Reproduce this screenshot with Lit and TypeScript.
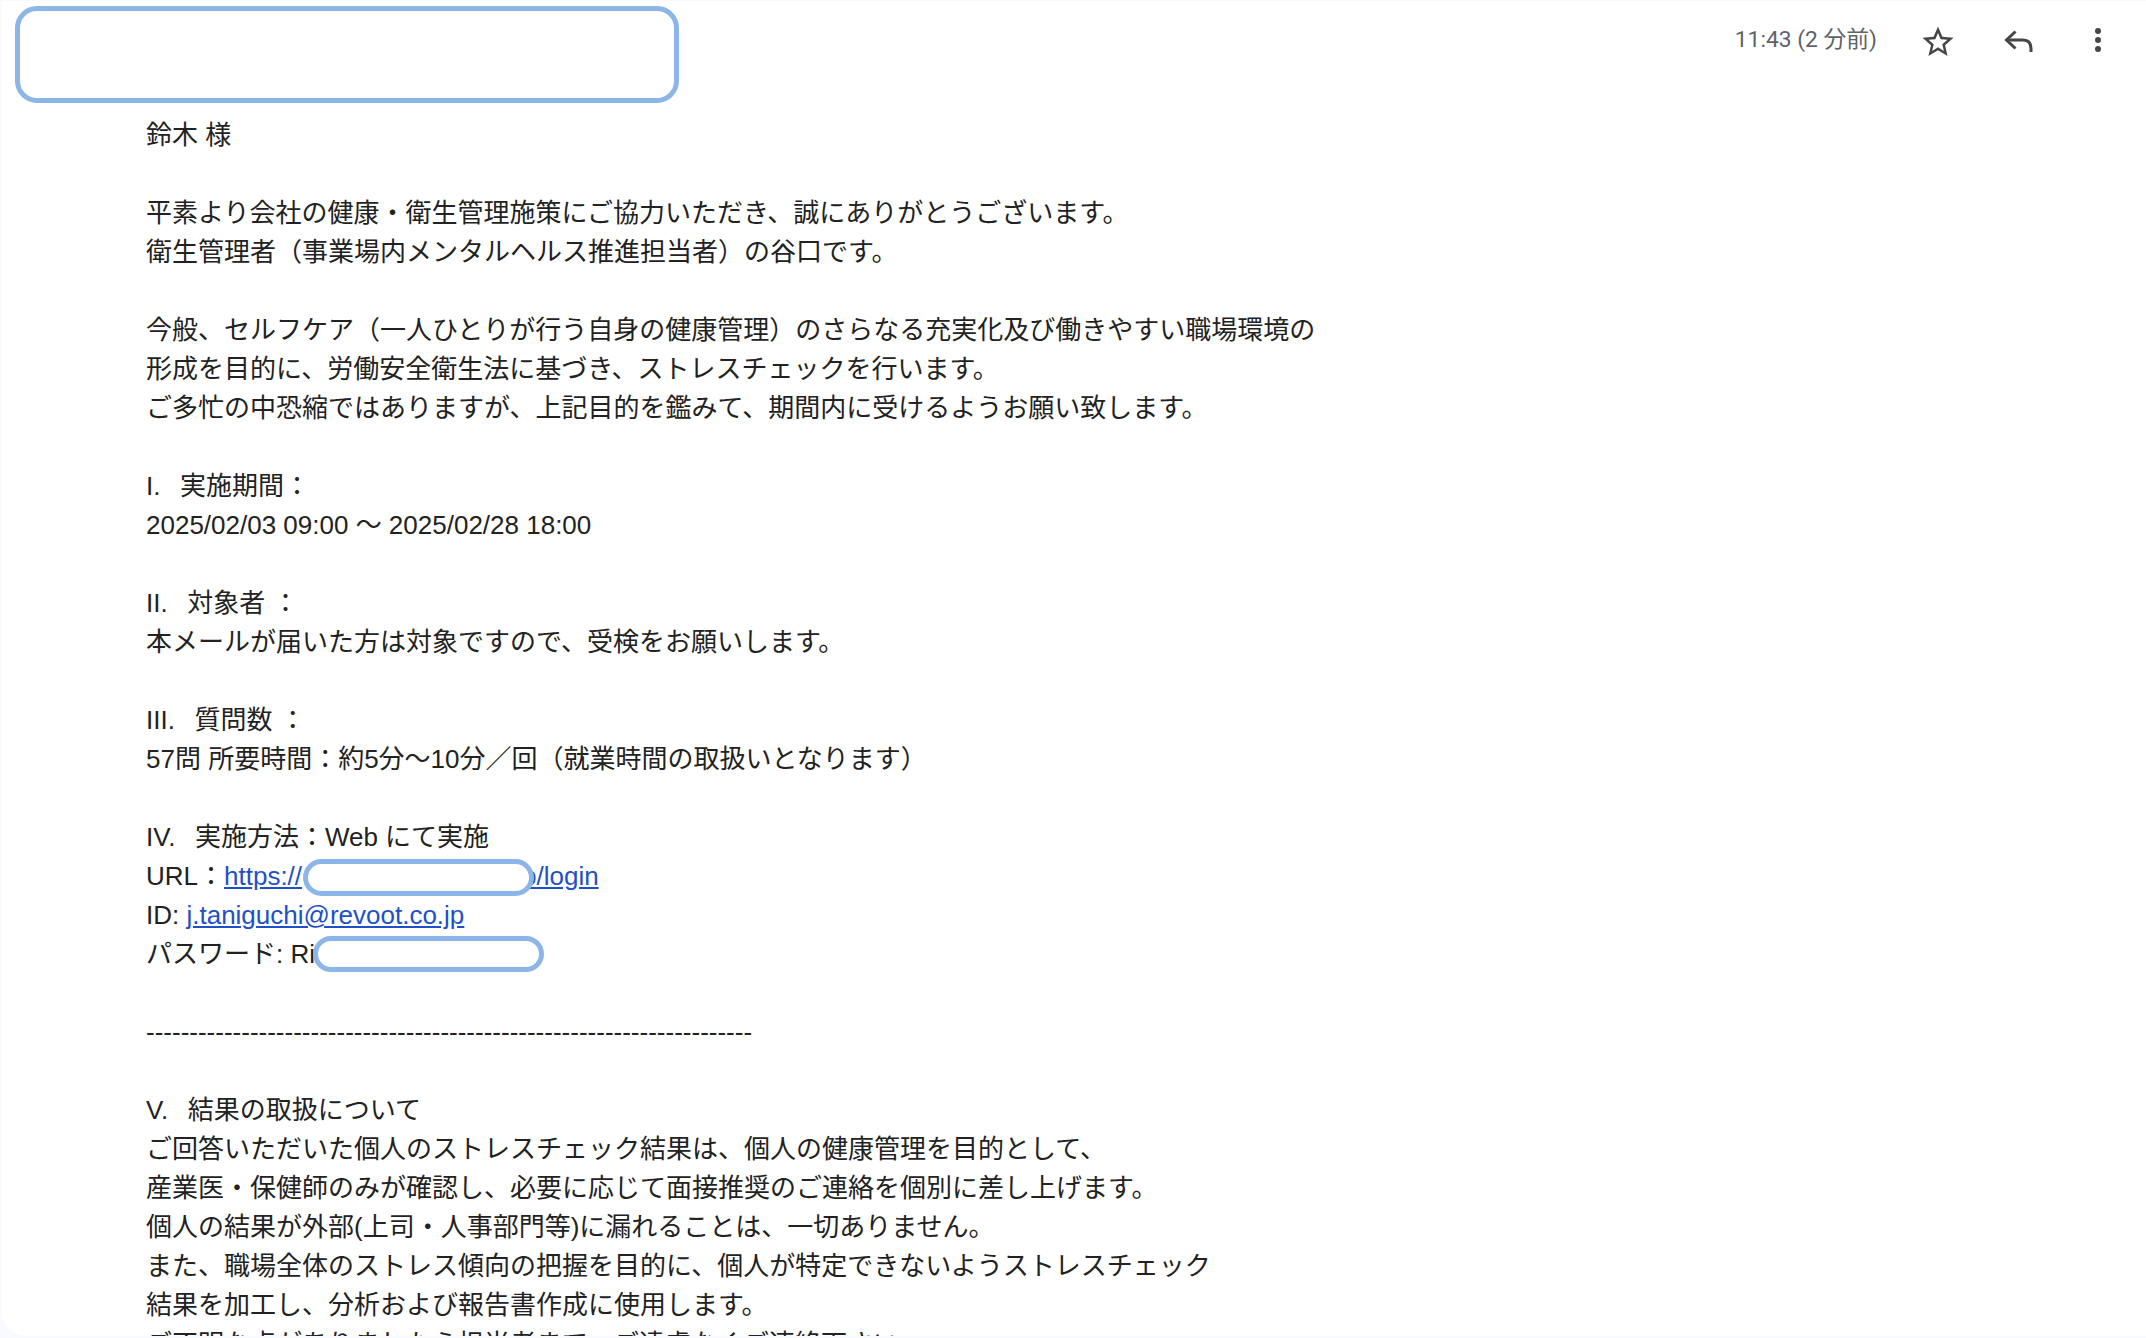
import { LitElement, html, css } from "lit";
import { customElement } from "lit/decorators.js";

@customElement("app-root")
export class AppRoot extends LitElement {
  static styles = css`
    :host {
      display: block;
      height: 1338px;
      overflow: hidden;
      background: #f8faff;
      font-family: "Liberation Sans", "Noto Sans CJK JP", sans-serif;
      color: #222;
    }
    .card {
      position: relative;
      height: 1335px;
      margin: 1px 0 0 2px;
      background: #fff;
      border-radius: 0 0 0 24px;
      overflow: hidden;
    }
    .head {
      height: 115px;
      display: flex;
      align-items: flex-start;
      justify-content: flex-end;
      padding-top: 20px;
      box-sizing: border-box;
    }
    .time {
      font-family: Roboto, "Noto Sans CJK JP", sans-serif;
      font-size: 22.8px;
      line-height: 38px;
      color: #5f6368;
      margin-right: 41px;
    }
    .icons { display: flex; gap: 40px; margin-right: 28px; }
    .icons svg { width: 40px; height: 40px; fill: #444746; display: block; }
    .icons .reply { fill: none; stroke: #444746; stroke-width: 3; }
    .body {
      padding-left: 144px;
      font-size: 26px;
      line-height: 39px;
      white-space: pre;
    }
    .line { height: 39px; }
    .n { margin-right: 19.5px; }
    .gap { display: inline-block; width: 220px; }
    a { color: #1f50c8; text-decoration: underline; }
    .mask {
      position: absolute;
      box-sizing: border-box;
      background: #fff;
      border: 5px solid #8cb5e8;
    }
    .m1 { left: 13px; top: 5px; width: 664px; height: 97px; border-radius: 22px; }
    .m2 { left: 301px; top: 858px; width: 231px; height: 37px; border-radius: 19px; }
    .m3 { left: 311px; top: 935px; width: 231px; height: 36px; border-radius: 18px; }
  `;

  private lines = [
    "鈴木 様",
    "",
    "平素より会社の健康・衛生管理施策にご協力いただき、誠にありがとうございます。",
    "衛生管理者（事業場内メンタルヘルス推進担当者）の谷口です。",
    "",
    "今般、セルフケア（一人ひとりが行う自身の健康管理）のさらなる充実化及び働きやすい職場環境の",
    "形成を目的に、労働安全衛生法に基づき、ストレスチェックを行います。",
    "ご多忙の中恐縮ではありますが、上記目的を鑑みて、期間内に受けるようお願い致します。",
    "",
    html`<span class="n">I.</span>実施期間：`,
    "2025/02/03 09:00 〜 2025/02/28 18:00",
    "",
    html`<span class="n">II.</span>対象者 ：`,
    "本メールが届いた方は対象ですので、受検をお願いします。",
    "",
    html`<span class="n">III.</span>質問数 ：`,
    "57問 所要時間：約5分〜10分／回（就業時間の取扱いとなります）",
    "",
    html`<span class="n">IV.</span>実施方法：Web にて実施`,
    html`URL：<a>https://<span class="gap"></span>p/login</a>`,
    html`ID: <a>j.taniguchi@revoot.co.jp</a>`,
    "パスワード: Ri",
    "",
    "----------------------------------------------------------------------",
    "",
    html`<span class="n">V.</span>結果の取扱について`,
    "ご回答いただいた個人のストレスチェック結果は、個人の健康管理を目的として、",
    "産業医・保健師のみが確認し、必要に応じて面接推奨のご連絡を個別に差し上げます。",
    "個人の結果が外部(上司・人事部門等)に漏れることは、一切ありません。",
    "また、職場全体のストレス傾向の把握を目的に、個人が特定できないようストレスチェック",
    "結果を加工し、分析および報告書作成に使用します。",
    "ご不明な点がありましたら担当者まで、ご遠慮なくご連絡下さい。",
  ];

  render() {
    return html`<div class="card">
      <div class="head">
        <span class="time">11:43 (2 分前)</span>
        <div class="icons">
          <svg viewBox="-0.9 -1.6 25.8 25.8"><path d="M22 9.24l-7.19-.62L12 2 9.19 8.63 2 9.24l5.46 4.73L5.82 21 12 17.27 18.18 21l-1.63-7.03L22 9.24zM12 15.4l-3.76 2.27 1-4.28-3.32-2.88 4.38-.38L12 6.1l1.71 4.04 4.38.38-3.32 2.88 1 4.28L12 15.4z"/></svg>
          <svg class="reply" viewBox="0 0 40 40"><path d="M17.5 10.5 L8.5 19 L17.5 27.5"/><path d="M8.5 19 H25 Q33 19 33 27.5 V31"/></svg>
          <svg viewBox="0 0 40 40"><circle cx="20" cy="10" r="3"/><circle cx="20" cy="19" r="3"/><circle cx="20" cy="28" r="3"/></svg>
        </div>
      </div>
      <div class="body">${this.lines.map((l) => html`<div class="line">${l}</div>`)}</div>
      <div class="mask m1"></div>
      <div class="mask m2"></div>
      <div class="mask m3"></div>
    </div>`;
  }
}
